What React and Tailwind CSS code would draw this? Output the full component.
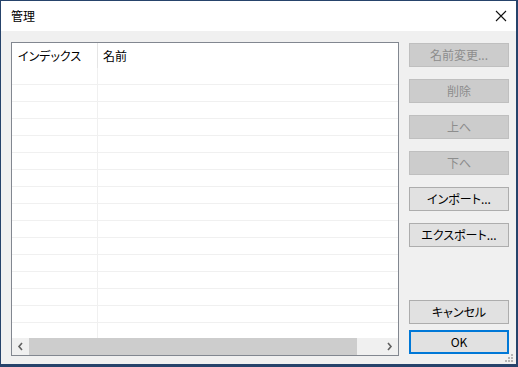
import React from "react";

const font = "font-['Noto_Sans_CJK_JP','Noto_Sans',sans-serif] [font-feature-settings:'palt']";

function Btn({ children, disabled, primary, className = "" }) {
  let cls = "h-[24px] w-[100px] flex items-center justify-center text-[12px] leading-none ";
  if (disabled) cls += "bg-[#cccccc] border border-[#bfbfbf] text-[#8d8d8d]";
  else if (primary) cls += "bg-[#e1e1e1] border-2 border-[#0078d7] text-black";
  else cls += "bg-[#e1e1e1] border border-[#adadad] text-black";
  return <div className={cls + " " + className}>{children}</div>;
}

function Row({ h = 17, last }) {
  return (
    <div className={`flex ${last ? "" : "border-b border-[#f0f0f0]"}`} style={{ height: h }}>
      <div className="w-[86px] border-r border-[#f0f0f0]" />
      <div className="flex-1" />
    </div>
  );
}

export default function App() {
  return (
    <div className={`w-[518px] h-[367px] flex flex-col border-t border-l border-r-2 border-b-[3px] border-[#26436b] bg-[#f0f0f0] relative ${font}`}>
      <div className="h-[30px] bg-white flex items-center justify-between pl-[10px] pr-[9px]">
        <span className="text-[12px] text-black">管理</span>
        <svg width="12" height="12" viewBox="0 0 12 12">
          <path d="M1 1 L11 11 M11 1 L1 11" stroke="#111" strokeWidth="1.1" fill="none" />
        </svg>
      </div>
      <div className="flex-1 flex pl-[10px] pt-[11px]">
        <div className="w-[388px] h-[314px] border border-[#828790] bg-white flex flex-col">
          <div className="h-[25px] flex items-center text-[12px] text-black">
            <div className="w-[86px] h-full border-r border-[#e5e5e5] flex items-center pl-[6px]">インデックス</div>
            <div className="pl-[5px]">名前</div>
          </div>
          <div className="flex-1 flex flex-col overflow-hidden">
            {Array.from({ length: 15 }).map((_, i) => (
              <Row key={i} />
            ))}
            <Row h={15} last />
          </div>
          <div className="h-[17px] flex bg-[#f0f0f0]">
            <div className="w-[17px] h-full flex items-center justify-center">
              <svg width="17" height="17" viewBox="0 0 17 17">
                <path d="M10 5 L7 8.5 L10 12" stroke="#606060" strokeWidth="1.6" fill="none" />
              </svg>
            </div>
            <div className="w-[328px] h-full bg-[#cdcdcd]" />
            <div className="flex-1" />
            <div className="w-[17px] h-full flex items-center justify-center">
              <svg width="17" height="17" viewBox="0 0 17 17">
                <path d="M7 5 L10 8.5 L7 12" stroke="#606060" strokeWidth="1.6" fill="none" />
              </svg>
            </div>
          </div>
        </div>
        <div className="ml-[10px] mt-[1px] h-[311px] flex flex-col">
          <div className="flex flex-col gap-[12px]">
            <Btn disabled>名前変更...</Btn>
            <Btn disabled>削除</Btn>
            <Btn disabled>上へ</Btn>
            <Btn disabled>下へ</Btn>
            <Btn>インポート...</Btn>
            <Btn>エクスポート...</Btn>
          </div>
          <div className="flex-1" />
          <Btn>キャンセル</Btn>
          <Btn primary className="mt-[6px]">OK</Btn>
        </div>
      </div>
      <svg className="absolute right-[2px] bottom-[1px]" width="10" height="10" viewBox="0 0 10 10">
        <g fill="#b5b5b5">
          <rect x="7" y="1" width="2" height="2" />
          <rect x="4" y="4" width="2" height="2" />
          <rect x="7" y="4" width="2" height="2" />
          <rect x="1" y="7" width="2" height="2" />
          <rect x="4" y="7" width="2" height="2" />
          <rect x="7" y="7" width="2" height="2" />
        </g>
      </svg>
    </div>
  );
}
